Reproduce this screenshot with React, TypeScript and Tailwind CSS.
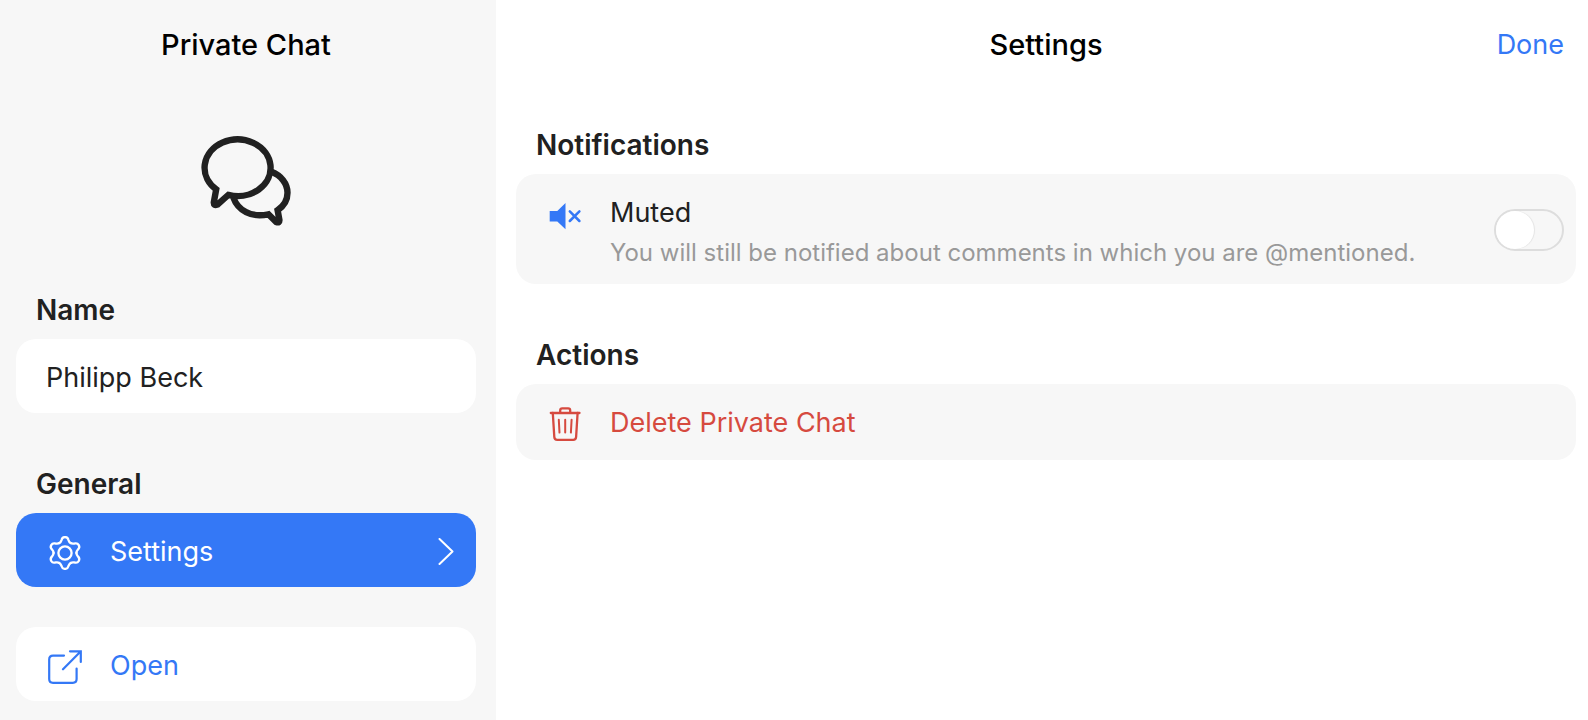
/**
 * PrivateChatSettings: chat sidebar plus the settings pane next to it
 */
import type { ReactNode } from 'react'

interface IconProps {
  className?: string
}

export default function App() {
  return (
    <div className="flex min-h-screen bg-white font-['Inter',sans-serif] text-[27px] leading-9 text-[#212121]">
      <aside className="w-[496px] shrink-0 bg-[#f7f7f7] pl-4 pr-5 pb-4">
        <header className="flex h-[90px] items-center justify-center">
          <h1 className="text-[29px] font-medium text-black">Private Chat</h1>
        </header>

        <div className="flex justify-center pt-[46px] pb-[66px]">
          <ChatIcon className="h-[90px] w-[90px]" />
        </div>

        <section>
          <label htmlFor="chat-name" className="mb-[11px] block px-5 text-[28px] font-semibold">
            Name
          </label>
          <input
            id="chat-name"
            type="text"
            defaultValue="Philipp Beck"
            className="block w-full rounded-[20px] bg-white px-[30px] pt-[21px] pb-[17px] outline-none"
          />
        </section>

        <section className="mt-[53px]">
          <SectionTitle>General</SectionTitle>
          <nav className="flex flex-col gap-10">
            <a href="#settings" className="flex items-center rounded-[20px] bg-[#3478f6] pt-[21px] pb-[17px] pl-8 pr-5 text-white">
              <GearIcon className="mt-0.5 mr-7 h-[34px] w-[34px]" />
              <span className="flex-1">Settings</span>
              <ChevronIcon className="h-7 w-5" />
            </a>
            <a href="#open" className="flex items-center rounded-[20px] bg-white pt-[21px] pb-[17px] pl-8 pr-5 text-[#3478f6]">
              <OpenIcon className="mt-0.5 mr-7 h-[34px] w-[34px]" />
              <span>Open</span>
            </a>
          </nav>
        </section>
      </aside>

      <main className="min-w-0 flex-1 pl-5 pr-3">
        <header className="grid h-[90px] grid-cols-[1fr_auto_1fr] items-center px-3">
          <h2 className="col-start-2 text-[29px] font-medium text-black">Settings</h2>
          <button type="button" className="justify-self-end text-[#3478f6]">
            Done
          </button>
        </header>

        <section className="mt-[37px]">
          <SectionTitle>Notifications</SectionTitle>
          <div className="flex items-center rounded-[20px] bg-[#f7f7f7] pt-[21px] pb-[15px] pl-8 pr-3">
            <MutedIcon className="mt-0.5 mr-7 h-[34px] w-[34px] shrink-0 self-start text-[#3478f6]" />
            <label htmlFor="muted" className="flex-1">
              <span className="block">Muted</span>
              <span className="mt-1.5 block text-2xl text-[#999999]">
                You will still be notified about comments in which you are @mentioned.
              </span>
            </label>
            <input
              id="muted"
              type="checkbox"
              role="switch"
              className="mb-1 flex h-[42px] w-[70px] shrink-0 appearance-none rounded-full border-2 border-[#dddddd] before:h-[38px] before:w-[38px] before:rounded-full before:bg-white before:shadow-[1px_0_1px_rgba(0,0,0,0.08)] before:content-[''] checked:justify-end checked:border-[#3478f6] checked:bg-[#3478f6]"
            />
          </div>
        </section>

        <section className="mt-[53px]">
          <SectionTitle>Actions</SectionTitle>
          <button
            type="button"
            className="flex w-full items-center rounded-[20px] bg-[#f7f7f7] pt-[21px] pb-[19px] pl-8 pr-3 text-left text-[#d64a3f]"
          >
            <TrashIcon className="mt-0.5 mr-7 h-[34px] w-[34px]" />
            <span>Delete Private Chat</span>
          </button>
        </section>
      </main>
    </div>
  )
}

function SectionTitle({ children }: { children: ReactNode }) {
  return <h3 className="mb-[11px] px-5 text-[28px] font-semibold">{children}</h3>
}

function ChatIcon({ className }: IconProps) {
  return (
    <svg className={className} viewBox="0 0 90 90" fill="none" stroke="currentColor" strokeWidth="6.4" aria-hidden="true">
      <path d="M27.3 58.9A33 28.3 0 1 0 15.2 53.3L12.8 66.4Q12.6 70 16.4 68.6Z" />
      <path d="M70.5 35.8C80 39.5 86.5 47.5 86.5 56.8C86.5 63.6 83 70 76.6 74.2L78.4 84Q78.6 87.4 75.2 86L67.4 78.3C50 82 37 74.5 32.3 61.5" />
    </svg>
  )
}

function GearIcon({ className }: IconProps) {
  return (
    <svg className={className} viewBox="0 0 34 34" fill="none" stroke="currentColor" strokeWidth="2.3" strokeLinecap="round" aria-hidden="true">
      <circle cx="17" cy="17" r="6.6" />
      {/* one tooth, repeated around the hub */}
      {[0, 60, 120, 180, 240, 300].map(angle => (
        <path
          key={angle}
          transform={`translate(17 17) rotate(${angle})`}
          d="M-5.7 -9.9C-4.1 -10.8 -3.8 -12 -3.4 -13.2C-2.9 -15 -1.6 -15.9 0 -15.9C1.6 -15.9 2.9 -15 3.4 -13.2C3.8 -12 4.1 -10.8 5.7 -9.9"
        />
      ))}
    </svg>
  )
}

function ChevronIcon({ className }: IconProps) {
  return (
    <svg className={className} viewBox="0 0 20 28" fill="none" stroke="currentColor" strokeWidth="2" strokeLinecap="round" strokeLinejoin="round" aria-hidden="true">
      <path d="M3.5 1L16.5 13.5L3.5 26" />
    </svg>
  )
}

function OpenIcon({ className }: IconProps) {
  return (
    <svg className={className} viewBox="0 0 34 34" fill="none" stroke="currentColor" strokeWidth="2.2" strokeLinecap="round" aria-hidden="true">
      <path d="M16 5.6H5Q1.2 5.6 1.2 9.4V29Q1.2 32.8 5 32.8H24.8Q28.6 32.8 28.6 29V18.5" />
      <path d="M15 19.3L32.6 1.5M22 1.3H32.8V12" />
    </svg>
  )
}

function MutedIcon({ className }: IconProps) {
  return (
    <svg className={className} viewBox="0 0 34 34" aria-hidden="true">
      <path d="M1.7 14H9.3L17.5 6V32.3L9.3 24.6H1.7Z" fill="currentColor" />
      <path d="M21.8 14.4L31.4 24M31.4 14.4L21.8 24" fill="none" stroke="currentColor" strokeWidth="2.5" strokeLinecap="round" />
    </svg>
  )
}

function TrashIcon({ className }: IconProps) {
  return (
    <svg className={className} viewBox="0 0 34 34" fill="none" stroke="currentColor" strokeWidth="2.3" strokeLinecap="round" aria-hidden="true">
      <path d="M2.8 6H31.5M12.2 6V3.4Q12.2 1.4 14.2 1.4H20.2Q22.2 1.4 22.2 3.4V6" />
      <path d="M4.8 6L6.3 30Q6.5 32.8 9.2 32.8H25.2Q27.9 32.8 28.1 30L29.6 6" />
      <path d="M10.8 12.8L11.5 25.6M17.2 12.8V25.6M23.6 12.8L22.9 25.6" strokeWidth="2" />
    </svg>
  )
}
